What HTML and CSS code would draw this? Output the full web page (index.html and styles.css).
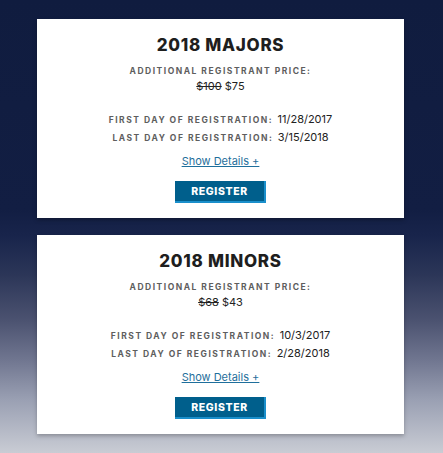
FILE: index.html
```html
<!DOCTYPE html>
<html>
<head>
<meta charset="utf-8">
<link rel="stylesheet" href="styles.css">
</head>
<body>
<div class="page">
  <div class="card">
    <h2 class="title">2018 MAJORS</h2>
    <div class="label">ADDITIONAL REGISTRANT PRICE:</div>
    <div class="price"><s>$100</s> $75</div>
    <div class="dates">
      <div class="row"><span class="label">FIRST DAY OF REGISTRATION:</span> <span class="val">11/28/2017</span></div>
      <div class="row"><span class="label">LAST DAY OF REGISTRATION:</span> <span class="val">3/15/2018</span></div>
    </div>
    <a class="details" href="#">Show Details +</a>
    <button class="register">REGISTER</button>
  </div>
  <div class="card">
    <h2 class="title">2018 MINORS</h2>
    <div class="label">ADDITIONAL REGISTRANT PRICE:</div>
    <div class="price"><s>$68</s> $43</div>
    <div class="dates">
      <div class="row"><span class="label">FIRST DAY OF REGISTRATION:</span> <span class="val">10/3/2017</span></div>
      <div class="row"><span class="label">LAST DAY OF REGISTRATION:</span> <span class="val">2/28/2018</span></div>
    </div>
    <a class="details" href="#">Show Details +</a>
    <button class="register">REGISTER</button>
  </div>
</div>
</body>
</html>
```
FILE: styles.css
```css
html, body {
  margin: 0;
  padding: 0;
  height: 453px;
  overflow: hidden;
}
body {
  font-family: "Inter", "Liberation Sans", sans-serif;
  background: linear-gradient(to bottom,
    #101c3f 0px,
    #121e43 210px,
    #18244b 235px,
    #2c3658 275px,
    #4b5270 320px,
    #707690 360px,
    #9aa0b3 400px,
    #c9ccd4 453px);
}
.page {
  padding: 19px 0 0 37px;
  display: flex;
  flex-direction: column;
  gap: 17px;
}
.card {
  width: 367px;
  height: 199px;
  box-sizing: border-box;
  background: #fff;
  padding-top: 15px;
  display: flex;
  flex-direction: column;
  align-items: center;
  box-shadow: 0 2px 4px rgba(0,0,0,0.25);
}
.title {
  margin: 0;
  font-size: 17px;
  line-height: 22px;
  font-weight: 800;
  color: #1e1e1e;
  letter-spacing: 0.7px;
}
.label {
  font-size: 8.5px;
  font-weight: 700;
  letter-spacing: 1.5px;
  color: #5e5e5e;
  line-height: 15px;
}
.card > .label {
  margin-top: 8px;
}
.price {
  font-size: 11px;
  line-height: 15px;
  color: #222;
}
.price s {
  color: #222;
}
.dates {
  margin-top: 16px;
  display: flex;
  flex-direction: column;
  align-items: center;
}
.row {
  line-height: 15px;
  white-space: nowrap;
}
.val {
  font-size: 11px;
  color: #222;
}
.details {
  margin-top: 8px;
  font-size: 11px;
  line-height: 15px;
  color: #1f6f9c;
  text-decoration: underline;
}
.register {
  margin-top: 12px;
  width: 91px;
  height: 22px;
  box-sizing: border-box;
  border: none;
  border-right: 2px solid #1a8fcb;
  border-bottom: 2px solid #1a8fcb;
  background: #005f8c;
  color: #fff;
  font-family: "Inter", "Liberation Sans", sans-serif;
  font-weight: 800;
  font-size: 10.5px;
  letter-spacing: 0.6px;
  padding: 0;
}
```
